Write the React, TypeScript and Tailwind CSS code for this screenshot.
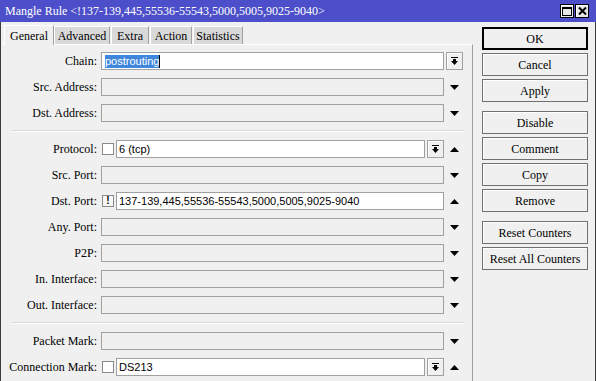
import React from "react";

const serif = "font-['Liberation_Serif','Times_New_Roman',serif]";
const sans = "font-['Liberation_Sans',Arial,sans-serif]";

function TriDown() {
    return (
        <svg width="9" height="5" viewBox="0 0 9 5">
            <polygon points="0,0 9,0 4.5,5" fill="#000" />
        </svg>
    );
}

function TriUp() {
    return (
        <svg width="9" height="5" viewBox="0 0 9 5">
            <polygon points="0,5 9,5 4.5,0" fill="#000" />
        </svg>
    );
}

function DropBtn() {
    return (
        <div className="w-[17px] h-[18px] shrink-0 border border-[#a0a0a0] bg-[#f0f0f0] shadow-[inset_1px_1px_0_#fff] flex items-center justify-center">
            <svg width="7" height="9" viewBox="0 0 7 9">
                <rect x="0" y="0" width="7" height="1" fill="#000" />
                <rect x="2" y="2" width="3" height="2" fill="#000" />
                <polygon points="0,4 7,4 3.5,8" fill="#000" />
            </svg>
        </div>
    );
}

function Label({ text }: { text: string }) {
    return <div className={`w-[95px] shrink-0 text-right text-[12px] leading-none text-black ${serif}`}>{text}</div>;
}

function EmptyRow({ label }: { label: string }) {
    return (
        <div className="flex items-center h-[18px]">
            <Label text={label} />
            <div className="ml-[4px] w-[343px] h-[18px] border border-[#a0a0a0] bg-[#f0f0f0]"></div>
            <div className="pl-[6px] flex items-center"><TriDown /></div>
        </div>
    );
}

function Separator() {
    return <div className="ml-[10px] w-[451px] h-[2px] border-t border-[#d8d8d8] border-b border-b-white"></div>;
}

const buttons = [
    ["OK", "Cancel", "Apply"],
    ["Disable", "Comment", "Copy", "Remove"],
    ["Reset Counters", "Reset All Counters"],
];

export default function App() {
    return (
        <div className="w-[596px] h-[381px] overflow-hidden bg-[#f0f0f0] flex flex-col">
            {/* Title bar */}
            <div className="h-[22px] shrink-0 bg-[#4c4fc9] flex items-center pl-[5px] pr-[7px]">
                <span className={`text-white text-[12px] leading-none ${serif}`}>
                    Mangle Rule &lt;!137-139,445,55536-55543,5000,5005,9025-9040&gt;
                </span>
                <div className="ml-auto flex gap-px">
                    <div className="w-[14px] h-[14px] border border-black bg-[#e6e6e6] shadow-[inset_1px_1px_0_#fff] flex items-center justify-center">
                        <svg width="10" height="9" viewBox="0 0 10 9">
                            <rect x="0.5" y="0.5" width="9" height="8" fill="none" stroke="#000" />
                            <rect x="0" y="0" width="10" height="2" fill="#000" />
                        </svg>
                    </div>
                    <div className="w-[14px] h-[14px] border border-black bg-[#e6e6e6] shadow-[inset_1px_1px_0_#fff] flex items-center justify-center">
                        <svg width="9" height="8" viewBox="0 0 9 8">
                            <path d="M1 0.5 L8 7.5 M8 0.5 L1 7.5" stroke="#000" strokeWidth="2" />
                        </svg>
                    </div>
                </div>
            </div>

            {/* Body */}
            <div className="flex-1 flex border-l border-r border-[#3c3c3c]">
                <div className="ml-px w-[471px] flex flex-col">
                    {/* Tabs */}
                    <div className={`h-[22px] flex items-end pl-[2px] text-[12px] leading-none ${serif}`}>
                        <div className="w-[50px] h-[20px] bg-[#f0f0f0] border-l border-t border-white border-r border-r-[#a0a0a0] flex items-start justify-center pt-[4px] relative top-px">
                            General
                        </div>
                        <div className="w-[56px] h-[18px] bg-[#d9d9d9] border-l border-t border-white border-r border-r-[#a0a0a0] flex items-center justify-center">Advanced</div>
                        <div className="ml-px w-[38px] h-[18px] bg-[#d9d9d9] border-l border-t border-white border-r border-r-[#a0a0a0] flex items-center justify-center">Extra</div>
                        <div className="ml-px w-[42px] h-[18px] bg-[#d9d9d9] border-l border-t border-white border-r border-r-[#a0a0a0] flex items-center justify-center">Action</div>
                        <div className="ml-px w-[50px] h-[18px] bg-[#d9d9d9] border-l border-t border-white border-r border-r-[#a0a0a0] flex items-center justify-center">Statistics</div>
                    </div>

                    {/* Panel */}
                    <div className="flex-1 border-t border-white border-r border-r-[#a0a0a0] pt-[7px] flex flex-col gap-2">
                        <div className="flex items-center h-[18px]">
                            <Label text="Chain:" />
                            <div className={`ml-[4px] w-[343px] h-[18px] border border-[#a0a0a0] bg-white flex items-center pl-[3px] text-[11px] ${sans}`}>
                                <span className="bg-[#3f86dd] text-white leading-[13px]">postrouting</span>
                                <span className="w-px h-[13px] bg-black"></span>
                            </div>
                            <div className="ml-[2px]"><DropBtn /></div>
                        </div>
                        <EmptyRow label="Src. Address:" />
                        <EmptyRow label="Dst. Address:" />
                        <Separator />

                        <div className="flex items-center h-[18px]">
                            <Label text="Protocol:" />
                            <div className="ml-[4px] w-[343px] flex items-center">
                                <div className="ml-px w-[12px] h-[12px] border border-[#8a8a8a] bg-white shrink-0"></div>
                                <div className={`ml-[2px] flex-1 h-[18px] border border-[#a0a0a0] bg-white flex items-center pl-[2px] text-[11px] ${sans}`}>6 (tcp)</div>
                                <div className="ml-[2px]"><DropBtn /></div>
                            </div>
                            <div className="pl-[6px] flex items-center"><TriUp /></div>
                        </div>
                        <EmptyRow label="Src. Port:" />
                        <div className="flex items-center h-[18px]">
                            <Label text="Dst. Port:" />
                            <div className="ml-[4px] w-[343px] flex items-center">
                                <div className={`ml-px w-[12px] h-[12px] border border-[#8a8a8a] bg-[#f8f8f8] shrink-0 flex items-center justify-center text-[10px] font-bold leading-none ${sans}`}>!</div>
                                <div className={`ml-[2px] flex-1 h-[18px] border border-[#a0a0a0] bg-white flex items-center pl-[2px] text-[11px] ${sans}`}>
                                    137-139,445,55536-55543,5000,5005,9025-9040
                                </div>
                            </div>
                            <div className="pl-[6px] flex items-center"><TriUp /></div>
                        </div>
                        <EmptyRow label="Any. Port:" />
                        <EmptyRow label="P2P:" />
                        <EmptyRow label="In. Interface:" />
                        <EmptyRow label="Out. Interface:" />
                        <Separator />

                        <EmptyRow label="Packet Mark:" />
                        <div className="flex items-center h-[18px]">
                            <Label text="Connection Mark:" />
                            <div className="ml-[4px] w-[343px] flex items-center">
                                <div className="ml-px w-[12px] h-[12px] border border-[#8a8a8a] bg-white shrink-0"></div>
                                <div className={`ml-[2px] flex-1 h-[18px] border border-[#a0a0a0] bg-white flex items-center pl-[2px] text-[11px] ${sans}`}>DS213</div>
                                <div className="ml-[2px]"><DropBtn /></div>
                            </div>
                            <div className="pl-[6px] flex items-center"><TriUp /></div>
                        </div>
                    </div>
                </div>

                {/* Buttons */}
                <div className="ml-[9px] w-[106px] pt-[5px] flex flex-col gap-[9px]">
                    {buttons.map((group, gi) => (
                        <div key={gi} className="flex flex-col gap-[3px]">
                            {group.map((b) => (
                                <div
                                    key={b}
                                    className={`h-[23px] flex items-center justify-center text-[12px] leading-none bg-[#f0f0f0] ${serif} ${
                                        b === "OK"
                                            ? "border-2 border-black"
                                            : "border border-[#707070] shadow-[inset_1px_1px_0_#fff]"
                                    }`}
                                >
                                    {b}
                                </div>
                            ))}
                        </div>
                    ))}
                </div>
            </div>
        </div>
    );
}
